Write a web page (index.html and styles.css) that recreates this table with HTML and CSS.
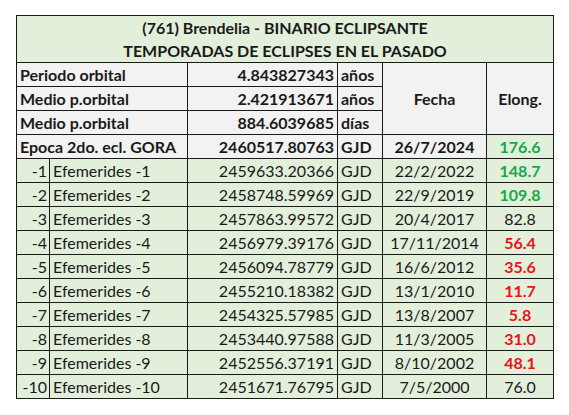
FILE: index.html
```html
<!DOCTYPE html>
<html lang="es">
<head>
<meta charset="utf-8">
<link rel="stylesheet" href="styles.css">
</head>
<body>
<table class="sheet">
  <colgroup>
    <col class="c1"><col class="c2"><col class="c3"><col class="c4"><col class="c5"><col class="c6">
  </colgroup>
  <tr class="title">
    <td colspan="6">(761) Brendelia - BINARIO ECLIPSANTE<br>TEMPORADAS DE ECLIPSES EN EL PASADO</td>
  </tr>
  <tr class="param">
    <td colspan="2" class="lbl">Periodo orbital</td>
    <td class="num">4.843827343</td>
    <td class="unit">años</td>
    <td rowspan="3" class="head">Fecha</td>
    <td rowspan="3" class="head">Elong.</td>
  </tr>
  <tr class="param">
    <td colspan="2" class="lbl">Medio p.orbital</td>
    <td class="num">2.421913671</td>
    <td class="unit">años</td>
  </tr>
  <tr class="param">
    <td colspan="2" class="lbl">Medio p.orbital</td>
    <td class="num">884.6039685</td>
    <td class="unit">días</td>
  </tr>
  <tr class="param">
    <td colspan="2" class="lbl">Epoca 2do. ecl. GORA</td>
    <td class="num">2460517.80763</td>
    <td class="unit">GJD</td>
    <td class="date">26/7/2024</td>
    <td class="el green-bg green">176.6</td>
  </tr>
  <tr class="row"><td class="idx">-1</td><td class="name">Efemerides -1</td><td class="num">2459633.20366</td><td class="unit">GJD</td><td class="date">22/2/2022</td><td class="el green">148.7</td></tr>
  <tr class="row"><td class="idx">-2</td><td class="name">Efemerides -2</td><td class="num">2458748.59969</td><td class="unit">GJD</td><td class="date">22/9/2019</td><td class="el green">109.8</td></tr>
  <tr class="row"><td class="idx">-3</td><td class="name">Efemerides -3</td><td class="num">2457863.99572</td><td class="unit">GJD</td><td class="date">20/4/2017</td><td class="el">82.8</td></tr>
  <tr class="row"><td class="idx">-4</td><td class="name">Efemerides -4</td><td class="num">2456979.39176</td><td class="unit">GJD</td><td class="date">17/11/2014</td><td class="el red">56.4</td></tr>
  <tr class="row"><td class="idx">-5</td><td class="name">Efemerides -5</td><td class="num">2456094.78779</td><td class="unit">GJD</td><td class="date">16/6/2012</td><td class="el red">35.6</td></tr>
  <tr class="row"><td class="idx">-6</td><td class="name">Efemerides -6</td><td class="num">2455210.18382</td><td class="unit">GJD</td><td class="date">13/1/2010</td><td class="el red">11.7</td></tr>
  <tr class="row"><td class="idx">-7</td><td class="name">Efemerides -7</td><td class="num">2454325.57985</td><td class="unit">GJD</td><td class="date">13/8/2007</td><td class="el red">5.8</td></tr>
  <tr class="row"><td class="idx">-8</td><td class="name">Efemerides -8</td><td class="num">2453440.97588</td><td class="unit">GJD</td><td class="date">11/3/2005</td><td class="el red">31.0</td></tr>
  <tr class="row"><td class="idx">-9</td><td class="name">Efemerides -9</td><td class="num">2452556.37191</td><td class="unit">GJD</td><td class="date">8/10/2002</td><td class="el red">48.1</td></tr>
  <tr class="row"><td class="idx">-10</td><td class="name">Efemerides -10</td><td class="num">2451671.76795</td><td class="unit">GJD</td><td class="date">7/5/2000</td><td class="el">76.0</td></tr>
</table>
</body>
</html>
```

FILE: styles.css
```css
html, body {
  margin: 0;
  padding: 0;
  background: #ffffff;
}
body {
  padding: 15px 0 0 16px;
  font-family: "Lato", "Open Sans", sans-serif;
  font-size: 16px;
  color: #1a1a1a;
}
.sheet {
  border-collapse: collapse;
  table-layout: fixed;
  width: 537px;
}
.c1 { width: 33px; }
.c2 { width: 138px; }
.c3 { width: 150px; }
.c4 { width: 45px; }
.c5 { width: 104px; }
.c6 { width: 67px; }
.sheet td {
  border: 1px solid #1a1a1a;
  padding: 0 3px;
  height: 23px;
  line-height: 22px;
  white-space: nowrap;
  overflow: hidden;
}
.title td {
  background: #e2efda;
  text-align: center;
  font-weight: bold;
  height: 46px;
  line-height: 23px;
  padding-top: 0;
}
.param td {
  background: #f2f2f2;
  font-weight: bold;
}
.row td {
  background: #e2efda;
}
.lbl { text-align: left; }
.num { text-align: right; }
.unit { text-align: left; }
.sheet td.idx { text-align: right; padding-right: 2px; padding-left: 0; }
.name { text-align: left; }
.date { text-align: center; }
.el { text-align: center; }
.head { text-align: center; vertical-align: middle; }
.param td.green-bg { background: #e2efda; }
.green { color: #18a84a; font-weight: bold; }
.red { color: #e8141a; font-weight: bold; }
```
